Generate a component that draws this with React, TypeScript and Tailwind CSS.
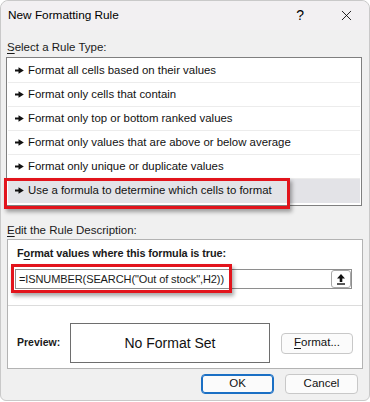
import { X } from "lucide-react";

const rules = [
  "Format all cells based on their values",
  "Format only cells that contain",
  "Format only top or bottom ranked values",
  "Format only values that are above or below average",
  "Format only unique or duplicate values",
  "Use a formula to determine which cells to format",
];

function Bullet() {
  return (
    <svg width="9" height="7" viewBox="0 0 9 7" className="shrink-0">
      <rect x="0" y="2.5" width="5" height="2" fill="#111" />
      <path d="M3.5 0.3 L8.8 3.5 L3.5 6.7 Z" fill="#111" />
    </svg>
  );
}

function UploadIcon() {
  return (
    <svg width="10" height="12" viewBox="0 0 10 12">
      <path d="M5 1 L9 5.5 L6.3 5.5 L6.3 9 L3.7 9 L3.7 5.5 L1 5.5 Z" fill="#111" />
      <rect x="1" y="10.3" width="8" height="1.4" fill="#111" />
    </svg>
  );
}

export default function App() {
  return (
    <div
      className="w-[370px] h-[402px] bg-white text-[#1a1a1a] text-[11.5px]"
      style={{ fontFamily: '"Liberation Sans", Arial, sans-serif' }}
    >
      <div className="w-[370px] h-[401px] rounded-t-[8px] rounded-b-[6px] border border-[#c9c9c9] bg-[#f0f0f0] flex flex-col">
        {/* title bar */}
        <div className="h-[29px] flex items-center pl-[7px] pr-[14px] bg-[#f2f0f2] rounded-t-[8px]">
          <span className="text-[11.8px] text-black">New Formatting Rule</span>
          <span className="ml-auto mr-[34px] text-[14px] text-black">?</span>
          <X size={17} strokeWidth={1.2} className="text-black" />
        </div>

        <div className="px-[5px] flex flex-col">
          <div className="mt-[9px] h-[17px] leading-[17px] pl-[1px]">
            <span className="underline underline-offset-2">S</span>elect a Rule Type:
          </div>

          {/* rule list */}
          <div className="relative mt-[1px] h-[149px] border border-[#7f7f7f] bg-white p-[1px] mr-[2px]">
            {rules.map((r, i) => (
              <div
                key={r}
                className={
                  "h-[24px] flex items-center gap-[4px] pl-[7px] border-b " +
                  (i === 5 ? "bg-[#e3e3e7] border-transparent" : "border-[#ececec]")
                }
              >
                <Bullet />
                <span className="text-[11.4px] text-[#111]">{r}</span>
              </div>
            ))}
            <div className="absolute left-[-3px] top-[120px] w-[286px] h-[31px] border-[3px] border-[#e2141c] shadow-[2px_3px_4px_rgba(0,0,0,0.35)] pointer-events-none" />
          </div>

          <div className="mt-[16px] h-[17px] leading-[17px] pl-[1px]">
            <span className="underline underline-offset-2">E</span>dit the Rule Description:
          </div>

          {/* description group */}
          <div className="relative mt-[0px] ml-[1px] mr-[1px] h-[130px] border border-[#b3b3b3] bg-white flex flex-col">
            <div className="mt-[5px] pl-[9px] h-[17px] leading-[17px] font-bold text-[10.9px] tracking-[-0.1px]">
              F<span className="underline underline-offset-2">o</span>rmat values where this formula is true:
            </div>
            <div className="mt-[7px] ml-[7px] mr-[10px] h-[20px] flex border border-[#8e8e8e]">
              <div className="flex-1 pl-[3px] leading-[18px] text-[11px] tracking-[-0.1px]">=ISNUMBER(SEARCH("Out of stock",H2))</div>
              <div className="w-[20px] h-[18px] border border-[#a8a8a8] rounded-[3px] bg-white flex items-center justify-center">
                <UploadIcon />
              </div>
            </div>
            <div className="absolute left-[3px] top-[24px] w-[221px] h-[29px] border-[3px] border-[#e2141c] shadow-[2px_3px_4px_rgba(0,0,0,0.35)] pointer-events-none" />
            <div className="mt-[16px] border-t border-[#dcdcdc]" />
            <div className="mt-[17px] flex items-center">
              <div className="w-[62px] pl-[9px] font-bold text-[10.5px]">Preview:</div>
              <div className="w-[200px] h-[40px] border border-[#6e6e6e] flex items-center justify-center text-[14px] text-[#111]">
                No Format Set
              </div>
              <button className="ml-[11px] w-[72px] h-[21px] border border-[#c8c8c8] rounded-[4px] bg-[#fbfbfb] text-[11.5px] text-[#111]">
                <span className="underline underline-offset-2">F</span>ormat...
              </button>
            </div>
          </div>

          {/* dialog buttons */}
          <div className="mt-[5px] flex justify-end gap-[11px] pr-[6px]">
            <button className="w-[73px] h-[20px] border border-[#1a6fc4] rounded-[4px] bg-[#fbfbfb] text-[11.5px] text-[#111] shadow-[inset_0_0_0_1px_#1a6fc4]">
              OK
            </button>
            <button className="w-[73px] h-[20px] border border-[#c8c8c8] rounded-[4px] bg-[#fbfbfb] text-[11.5px] text-[#111]">
              Cancel
            </button>
          </div>
        </div>
      </div>
    </div>
  );
}
